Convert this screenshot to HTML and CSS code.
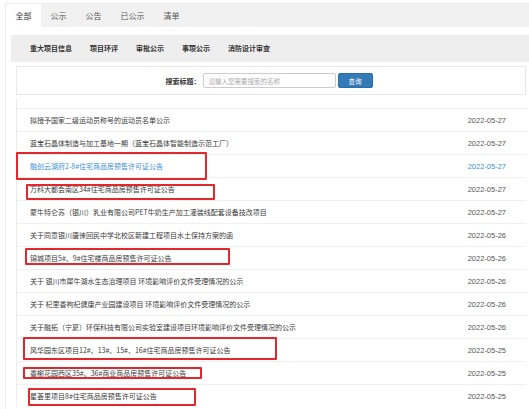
FILE: index.html
```
<!doctype html>
<html>
    <head>
        <meta charset="utf-8">
        <title>公示公告</title>
        <link rel="stylesheet" href="styles.css">
    </head>
    <body>
        <div class="page">
            <ul class="tabs">
                <li class="active">全部</li>
                <li>公示</li>
                <li>公告</li>
                <li>已公示</li>
                <li>清单</li>
            </ul>
            <div class="content">
                <ul class="subnav">
                    <li>重大项目信息</li>
                    <li>项目环评</li>
                    <li>审批公示</li>
                    <li>事项公示</li>
                    <li>消防设计审查</li>
                </ul>
                <div class="panel">
                    <form class="search">
                        <label for="title">搜索标题：</label>
                        <input id="title" type="text" placeholder="请输入您需要搜索的名称">
                        <button type="button">查询</button>
                    </form>
                    <ul class="list">
                        <li><a>拟授予国家二级运动员称号的运动员名单公示</a><span class="date">2022-05-27</span></li>
                        <li><a>蓝宝石晶体制造与加工基地一期（蓝宝石晶体智能制造示范工厂）</a><span class="date">2022-05-27</span></li>
                        <li class="hover"><a>融创云湖府2-8#住宅商品房预售许可证公告</a><span class="date">2022-05-27</span></li>
                        <li><a>万科大都会南区34#住宅商品房预售许可证公告</a><span class="date">2022-05-27</span></li>
                        <li><a>蒙牛特仑苏（银川）乳业有限公司PET牛奶生产加工灌装线配套设备技改项目</a><span class="date">2022-05-27</span></li>
                        <li><a>关于同意银川唐徕回民中学北校区新建工程项目水土保持方案的函</a><span class="date">2022-05-26</span></li>
                        <li><a>锦城项目5#、9#住宅楼商品房预售许可证公告</a><span class="date">2022-05-26</span></li>
                        <li><a>关于 银川市犀牛湖水生态治理项目 环境影响评价文件受理情况的公示</a><span class="date">2022-05-26</span></li>
                        <li><a>关于 杞里香枸杞健康产业园建设项目 环境影响评价文件受理情况的公示</a><span class="date">2022-05-26</span></li>
                        <li><a>关于融拓（宁夏）环保科技有限公司实验室建设项目环境影响评价文件受理情况的公示</a><span class="date">2022-05-26</span></li>
                        <li><a>风华园东区项目12#、13#、15#、16#住宅商品房预售许可证公告</a><span class="date">2022-05-25</span></li>
                        <li><a>香榭花园西区35#、36#商业商品房预售许可证公告</a><span class="date">2022-05-25</span></li>
                        <li><a>星荟里项目8#住宅商品房预售许可证公告</a><span class="date">2022-05-25</span></li>
                    </ul>
                </div>
            </div>
        </div>
        <!-- hand-drawn highlight marks -->
        <div class="mark" style="left: 16px; top: 152px; width: 191px; height: 28px;"></div>
        <div class="mark" style="left: 26px; top: 184px; width: 189px; height: 16px;"></div>
        <div class="mark" style="left: 25px; top: 248px; width: 205px; height: 17px;"></div>
        <div class="mark" style="left: 23px; top: 337px; width: 254px; height: 23px;"></div>
        <div class="mark" style="left: 23px; top: 367px; width: 179px; height: 12px;"></div>
        <div class="mark" style="left: 28px; top: 388px; width: 168px; height: 18px;"></div>
    </body>
</html>
```

FILE: styles.css
```
html,
body {
    margin: 0;
    padding: 0;
    background-color: #fff;
    overflow: hidden;
}

* {
    font-family: "Noto Sans CJK SC", "Noto Sans", sans-serif;
    box-sizing: border-box;
}

ul {
    list-style: none;
    margin: 0;
    padding: 0;
}

.page {
    margin: 3px 0 0 5px;
    border-top: 1px solid #ececec;
    border-left: 1px solid #ececec;
    height: 420px;
}

.tabs {
    display: flex;
    height: 23px;
    background-color: #f1f1f1;
}

.tabs li {
    padding: 0 9.5px;
    font-size: 8px;
    line-height: 23px;
    color: #555;
}

.tabs li.active {
    background-color: #fff;
    color: #333;
}

.content {
    padding: 8px 0 0 5px;
}

.subnav {
    display: flex;
    height: 27px;
    padding-left: 10px;
    background-color: #eeeeee;
}

.subnav li {
    padding: 0 9px;
    font-size: 7px;
    font-weight: 600;
    line-height: 27px;
    color: #333;
}

.panel {
    padding: 4px 3px 0 5px;
}

.search {
    display: flex;
    align-items: center;
    justify-content: center;
    height: 29px;
    margin: 0;
    border: 1px solid #e8e8e8;
    padding-right: 4px;
}

.search label {
    font-size: 7px;
    font-weight: bold;
    color: #333;
    margin-right: 2px;
}

.search input {
    width: 133px;
    height: 15px;
    border: 1px solid #ccc;
    border-radius: 2px;
    padding: 0 5px;
    font-size: 6.5px;
    outline: none;
}

.search input::placeholder {
    color: #aaa;
}

.search button {
    width: 35px;
    height: 15px;
    margin-left: 2px;
    border: 1px solid #2e6da4;
    border-radius: 2px;
    background-color: #337ab7;
    color: #fff;
    font-size: 6.5px;
    padding: 0;
}

.list {
    margin-top: 3px;
    padding-top: 10px;
    border-left: 1px solid #ececec;
}

.list li {
    display: flex;
    justify-content: space-between;
    align-items: center;
    height: 23px;
    border-top: 1px solid #f0f0f0;
    padding: 0 20px 0 13px;
}

.list a {
    font-size: 7px;
    color: #3a3a3a;
    white-space: nowrap;
    overflow: hidden;
}

.list .date {
    font-family: "Liberation Sans", Arial, sans-serif;
    font-size: 7.5px;
    color: #555;
}

.list li.hover a,
.list li.hover .date {
    color: #3b8fd9;
}

.mark {
    position: absolute;
    border: 2px solid #e5262b;
    border-radius: 1px;
}
```
